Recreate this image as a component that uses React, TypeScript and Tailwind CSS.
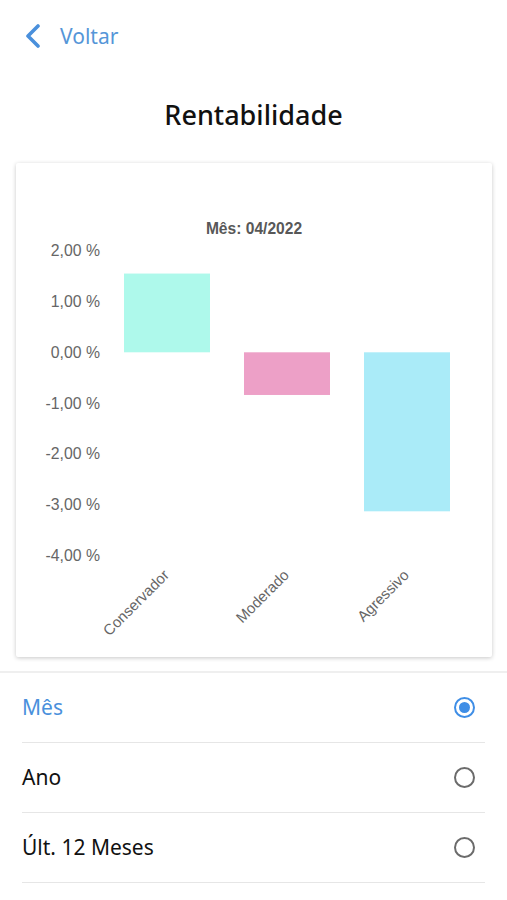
const bars = [
  { label: "Conservador", value: 1.55, color: "#aef9eb", x: 124 },
  { label: "Moderado", value: -0.84, color: "#eda0c7", x: 244 },
  { label: "Agressivo", value: -3.13, color: "#aaebf8", x: 364 },
];

const ticks = [2, 1, 0, -1, -2, -3, -4];
const zeroY = 352.3;
const perUnit = 50.8;

const options = [
  { label: "Mês", selected: true },
  { label: "Ano", selected: false },
  { label: "Últ. 12 Meses", selected: false },
];

function Chart() {
  return (
    <svg
      viewBox="16 163 476 494"
      className="block w-full h-full"
      style={{ fontFamily: '"Liberation Sans", Arial, sans-serif' }}
    >
      <text x={254} y={234} textAnchor="middle" fontSize={15.6} fontWeight={700} fill="#585858">
        Mês: 04/2022
      </text>
      {ticks.map((t) => (
        <text
          key={t}
          x={100}
          y={zeroY - t * perUnit + 5.5}
          textAnchor="end"
          fontSize={15.8}
          fill="#666"
        >
          {t.toFixed(2).replace(".", ",")} %
        </text>
      ))}
      {bars.map((b) => {
        const h = Math.abs(b.value) * perUnit;
        const y = b.value >= 0 ? zeroY - h : zeroY;
        return <rect key={b.label} x={b.x} y={y} width={86} height={h} fill={b.color} />;
      })}
      {bars.map((b) => (
        <text
          key={b.label}
          x={b.x + 46}
          y={576}
          textAnchor="end"
          fontSize={15}
          fill="#666"
          transform={`rotate(-45 ${b.x + 46} 576)`}
        >
          {b.label}
        </text>
      ))}
    </svg>
  );
}

function Radio({ selected }: { selected: boolean }) {
  return selected ? (
    <span className="flex w-[21px] h-[21px] items-center justify-center rounded-full border-[2.5px] border-[#3f8ee6]">
      <span className="w-[11px] h-[11px] rounded-full bg-[#3f8ee6]" />
    </span>
  ) : (
    <span className="block w-[21px] h-[21px] rounded-full border-2 border-[#6b6b6b]" />
  );
}

export default function App() {
  return (
    <div className="w-[507px] min-h-[900px] bg-white" style={{ fontFamily: '"Noto Sans", "Open Sans", sans-serif' }}>
      <div className="flex h-[72px] items-center pl-[24px]">
        <svg width="18" height="24" viewBox="0 0 18 24" className="mr-[18px]">
          <path d="M14 2 L4 12 L14 22" fill="none" stroke="#4a90dc" strokeWidth="3.6" strokeLinecap="round" strokeLinejoin="round" />
        </svg>
        <span className="text-[21px] text-[#5596d8] leading-none">Voltar</span>
      </div>
      <h1 className="pt-[26px] text-center text-[27px] font-medium leading-[34px] text-[#111]">Rentabilidade</h1>
      <div className="mx-[16px] mt-[31px] h-[494px] w-[476px] rounded-[2px] bg-white shadow-[0_1px_4px_rgba(0,0,0,0.22)]">
        <Chart />
      </div>
      <div className="mt-[14px] h-[2px] bg-[#efefef]" />
      <ul className="px-[22px]">
        {options.map((o) => (
          <li key={o.label} className="flex h-[70px] items-center justify-between border-b-[1.5px] border-[#e6e6e6] pr-[10px]">
            <span className={`text-[21px] ${o.selected ? "text-[#4a90dc]" : "text-[#111]"}`}>{o.label}</span>
            <Radio selected={o.selected} />
          </li>
        ))}
      </ul>
    </div>
  );
}
